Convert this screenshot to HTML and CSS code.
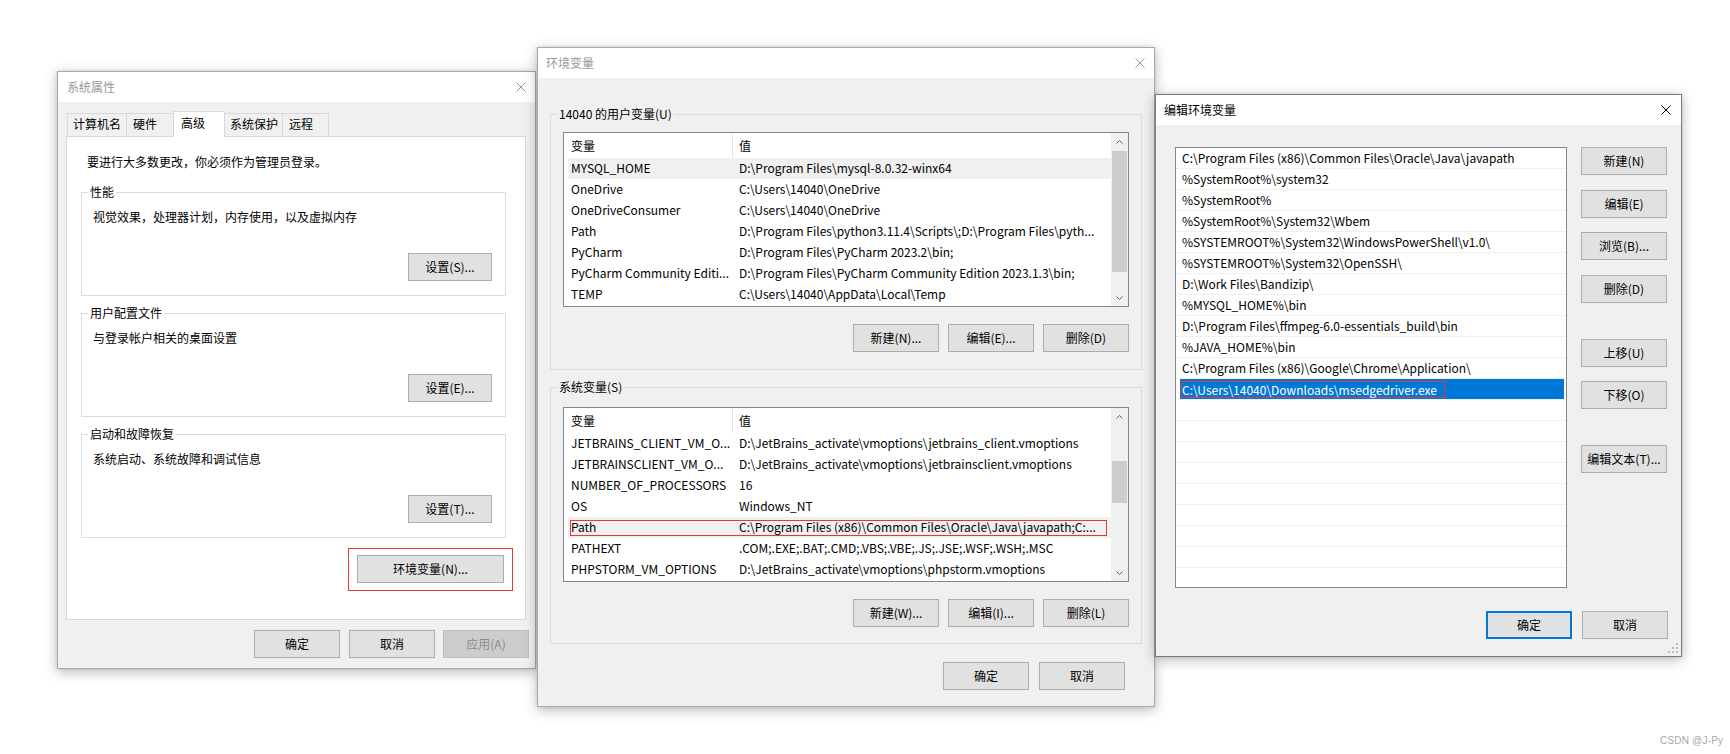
FILE: index.html
```html
<!DOCTYPE html>
<html lang="zh-CN">
<head>
<meta charset="utf-8">
<title>环境变量</title>
<link rel="stylesheet" href="styles.css">
</head>
<body>
<section class="win win-sys">
  <header class="titlebar">
    <span class="title t9">系统属性</span>
    <span class="close"><svg viewBox="0 0 10 10" width="10" height="10"><path d="M0.5 0.5L9.5 9.5M9.5 0.5L0.5 9.5" stroke="currentColor" stroke-width="1" fill="none"/></svg></span>
  </header>
  <div class="sys-body">
    <div class="tabs">
      <div class="tab w60">计算机名</div>
      <div class="tab w48 p6">硬件</div>
      <div class="tab sel w52">高级</div>
      <div class="tab w59">系统保护</div>
      <div class="tab w47 p6">远程</div>
    </div>
    <div class="tabpanel">
      <p class="intro">要进行大多数更改，你必须作为管理员登录。</p>
      <div class="grp sgrp g-first">
        <div class="grp-label white">性能</div>
        <p class="grp-text">视觉效果，处理器计划，内存使用，以及虚拟内存</p>
        <div class="grp-actions"><button class="btn btn-set">设置(S)...</button></div>
      </div>
      <div class="grp sgrp g-next">
        <div class="grp-label white">用户配置文件</div>
        <p class="grp-text">与登录帐户相关的桌面设置</p>
        <div class="grp-actions"><button class="btn btn-set">设置(E)...</button></div>
      </div>
      <div class="grp sgrp g-next">
        <div class="grp-label white">启动和故障恢复</div>
        <p class="grp-text">系统启动、系统故障和调试信息</p>
        <div class="grp-actions"><button class="btn btn-set">设置(T)...</button></div>
      </div>
      <div class="env-row">
        <div class="redbox"><button class="btn btn-env">环境变量(N)...</button></div>
      </div>
    </div>
    <div class="sys-footer">
      <button class="btn mr9">确定</button>
      <button class="btn mr8">取消</button>
      <button class="btn disabled">应用(A)</button>
    </div>
  </div>
</section>

<section class="win win-env">
  <header class="titlebar">
    <span class="title">环境变量</span>
    <span class="close"><svg viewBox="0 0 10 10" width="10" height="10"><path d="M0.5 0.5L9.5 9.5M9.5 0.5L0.5 9.5" stroke="currentColor" stroke-width="1" fill="none"/></svg></span>
  </header>
  <div class="env-body">
    <div class="grp egrp">
      <div class="grp-label">14040 的用户变量(U)</div>
      <div class="lv lv-u">
        <div class="lv-main">
          <div class="lv-head"><div class="c1">变量</div><div class="c2">值</div></div>
          <div class="lv-row hl"><div class="c1">MYSQL_HOME</div><div class="c2">D:\Program Files\mysql-8.0.32-winx64</div></div>
          <div class="lv-row"><div class="c1">OneDrive</div><div class="c2">C:\Users\14040\OneDrive</div></div>
          <div class="lv-row"><div class="c1">OneDriveConsumer</div><div class="c2">C:\Users\14040\OneDrive</div></div>
          <div class="lv-row"><div class="c1">Path</div><div class="c2">D:\Program Files\python3.11.4\Scripts\;D:\Program Files\pyth...</div></div>
          <div class="lv-row"><div class="c1">PyCharm</div><div class="c2">D:\Program Files\PyCharm 2023.2\bin;</div></div>
          <div class="lv-row"><div class="c1">PyCharm Community Editi...</div><div class="c2">D:\Program Files\PyCharm Community Edition 2023.1.3\bin;</div></div>
          <div class="lv-row"><div class="c1">TEMP</div><div class="c2">C:\Users\14040\AppData\Local\Temp</div></div>
        </div>
        <div class="vscroll">
          <div class="sb-btn"><svg width="7" height="4" viewBox="0 0 7 4"><path d="M0.5 3.5L3.5 0.5L6.5 3.5" fill="none" stroke="#606060"/></svg></div>
          <div class="sb-track"><div class="sb-thumb thumb-u"></div></div>
          <div class="sb-btn"><svg width="7" height="4" viewBox="0 0 7 4"><path d="M0.5 0.5L3.5 3.5L6.5 0.5" fill="none" stroke="#606060"/></svg></div>
        </div>
      </div>
      <div class="lv-actions">
        <button class="btn">新建(N)...</button>
        <button class="btn">编辑(E)...</button>
        <button class="btn">删除(D)</button>
      </div>
    </div>

    <div class="grp egrp egrp2">
      <div class="grp-label">系统变量(S)</div>
      <div class="lv lv-s">
        <div class="lv-main">
          <div class="lv-head"><div class="c1">变量</div><div class="c2">值</div></div>
          <div class="lv-row"><div class="c1">JETBRAINS_CLIENT_VM_O...</div><div class="c2">D:\JetBrains_activate\vmoptions\jetbrains_client.vmoptions</div></div>
          <div class="lv-row"><div class="c1">JETBRAINSCLIENT_VM_O...</div><div class="c2">D:\JetBrains_activate\vmoptions\jetbrainsclient.vmoptions</div></div>
          <div class="lv-row"><div class="c1">NUMBER_OF_PROCESSORS</div><div class="c2">16</div></div>
          <div class="lv-row"><div class="c1">OS</div><div class="c2">Windows_NT</div></div>
          <div class="lv-row hl marked"><div class="c1">Path</div><div class="c2">C:\Program Files (x86)\Common Files\Oracle\Java\javapath;C:...</div></div>
          <div class="lv-row"><div class="c1">PATHEXT</div><div class="c2">.COM;.EXE;.BAT;.CMD;.VBS;.VBE;.JS;.JSE;.WSF;.WSH;.MSC</div></div>
          <div class="lv-row"><div class="c1">PHPSTORM_VM_OPTIONS</div><div class="c2">D:\JetBrains_activate\vmoptions\phpstorm.vmoptions</div></div>
        </div>
        <div class="vscroll">
          <div class="sb-btn"><svg width="7" height="4" viewBox="0 0 7 4"><path d="M0.5 3.5L3.5 0.5L6.5 3.5" fill="none" stroke="#606060"/></svg></div>
          <div class="sb-track"><div class="sb-thumb thumb-s"></div></div>
          <div class="sb-btn"><svg width="7" height="4" viewBox="0 0 7 4"><path d="M0.5 0.5L3.5 3.5L6.5 0.5" fill="none" stroke="#606060"/></svg></div>
        </div>
      </div>
      <div class="lv-actions">
        <button class="btn">新建(W)...</button>
        <button class="btn">编辑(I)...</button>
        <button class="btn">删除(L)</button>
      </div>
    </div>

    <div class="env-footer">
      <button class="btn">确定</button>
      <button class="btn">取消</button>
    </div>
  </div>
</section>

<section class="win win-edit">
  <header class="titlebar active">
    <span class="title">编辑环境变量</span>
    <span class="close wide"><svg viewBox="0 0 10 10" width="10" height="10"><path d="M0.5 0.5L9.5 9.5M9.5 0.5L0.5 9.5" stroke="currentColor" stroke-width="1" fill="none"/></svg></span>
  </header>
  <div class="edit-main">
    <div class="pathlist">
      <div class="prow">C:\Program Files (x86)\Common Files\Oracle\Java\javapath</div>
      <div class="prow">%SystemRoot%\system32</div>
      <div class="prow">%SystemRoot%</div>
      <div class="prow">%SystemRoot%\System32\Wbem</div>
      <div class="prow">%SYSTEMROOT%\System32\WindowsPowerShell\v1.0\</div>
      <div class="prow">%SYSTEMROOT%\System32\OpenSSH\</div>
      <div class="prow">D:\Work Files\Bandizip\</div>
      <div class="prow">%MYSQL_HOME%\bin</div>
      <div class="prow">D:\Program Files\ffmpeg-6.0-essentials_build\bin</div>
      <div class="prow">%JAVA_HOME%\bin</div>
      <div class="prow">C:\Program Files (x86)\Google\Chrome\Application\</div>
      <div class="prow selected"><span class="redtext">C:\Users\14040\Downloads\msedgedriver.exe</span></div>
      <div class="prow"></div>
      <div class="prow"></div>
      <div class="prow"></div>
      <div class="prow"></div>
      <div class="prow"></div>
      <div class="prow"></div>
      <div class="prow"></div>
      <div class="prow"></div>
      <div class="prow"></div>
    </div>
    <div class="btncol">
      <button class="btn">新建(N)</button>
      <button class="btn m15">编辑(E)</button>
      <button class="btn m14">浏览(B)...</button>
      <button class="btn m15">删除(D)</button>
      <button class="btn m36">上移(U)</button>
      <button class="btn m14">下移(O)</button>
      <button class="btn m36">编辑文本(T)...</button>
    </div>
  </div>
  <div class="edit-footer">
    <button class="btn primary">确定</button>
    <button class="btn">取消</button>
  </div>
  <svg class="grip" width="10" height="10" viewBox="0 0 10 10"><rect x="8" y="0" width="2" height="2"/><rect x="4" y="4" width="2" height="2"/><rect x="8" y="4" width="2" height="2"/><rect x="0" y="8" width="2" height="2"/><rect x="4" y="8" width="2" height="2"/><rect x="8" y="8" width="2" height="2"/></svg>
</section>

<div class="watermark">CSDN @J-Py</div>
</body>
</html>
```
FILE: styles.css
```css
* { box-sizing: border-box; }
html, body { margin: 0; padding: 0; }
body {
  width: 1730px;
  height: 754px;
  position: relative;
  overflow: hidden;
  background: #ffffff;
  color: #000;
  font-family: "Noto Sans CJK SC", "Noto Sans", sans-serif;
  font-size: 12px;
  line-height: 16px;
}
p { margin: 0; }

/* ---------- windows ---------- */
.win {
  position: absolute;
  display: flex;
  flex-direction: column;
  background: #f0f0f0;
  border: 1px solid #aaaaaa;
  box-shadow: 0 3px 12px rgba(0, 0, 0, 0.28), 0 0 3px rgba(0, 0, 0, 0.10);
}
.win-sys { left: 57px; top: 71px; width: 479px; height: 598px; z-index: 1; }
.win-env { left: 537px; top: 47px; width: 618px; height: 660px; z-index: 2; }
.win-edit { left: 1155px; top: 94px; width: 527px; height: 563px; z-index: 3; border-color: #7a7a7a; }

.titlebar {
  flex: none;
  height: 30px;
  background: #fff;
  display: flex;
  align-items: center;
  justify-content: space-between;
  padding-left: 8px;
  color: #999999;
}
.titlebar .title { margin-top: -1px; }
.titlebar .t9 { margin-left: 1px; }
.titlebar.active { color: #000; }
.close {
  width: 28px;
  height: 30px;
  display: flex;
  align-items: center;
  justify-content: center;
}
.close.wide { width: 30px; }
.close svg { display: block; }

/* ---------- buttons ---------- */
.btn {
  font: inherit;
  line-height: 16px;
  color: #000;
  background: #e1e1e1;
  border: 1px solid #adadad;
  border-radius: 0;
  padding: 0;
  margin: 0;
  width: 86px;
  height: 28px;
  flex: none;
}
.btn.disabled { background: #cccccc; border-color: #bfbfbf; color: #8c8c8c; }
.btn.primary { border: 2px solid #0078d7; }
.mr9 { margin-right: 9px; }
.mr8 { margin-right: 8px; }

/* ---------- system properties ---------- */
.sys-body { padding: 9px 0 0 8px; }
.tabs {
  display: flex;
  align-items: flex-end;
  height: 25px;
  padding-left: 1px;
}
.tab {
  height: 23px;
  border: 1px solid #d9d9d9;
  border-bottom: 0;
  margin-right: -1px;
  padding: 2px 0 0 5px;
  background: #f0f0f0;
  white-space: nowrap;
}
.tab.p6 { padding-left: 6px; }
.tab.sel {
  height: 26px;
  margin-bottom: -1px;
  padding: 3px 0 0 7px;
  background: #fff;
  position: relative;
  z-index: 1;
}
.w60 { width: 60px; }
.w48 { width: 48px; }
.w52 { width: 52px; }
.w59 { width: 59px; }
.w47 { width: 47px; }

.tabpanel {
  width: 460px;
  height: 484px;
  background: #fff;
  border: 1px solid #d9d9d9;
  padding: 17px 0 0 14px;
}
.intro { padding-left: 6px; }

.grp { border: 1px solid #dcdcdc; }
.grp-label {
  width: fit-content;
  margin-top: -9px;
  padding: 0 2px;
  background: #f0f0f0;
  white-space: nowrap;
}
.grp-label.white { background: #fff; }

.sgrp { width: 425px; padding: 0 13px 14px 11px; }
.sgrp .grp-label { margin-left: -5px; }
.g-first { margin-top: 22px; }
.g-next { margin-top: 17px; }
.grp-text { margin-top: 9px; }
.grp-actions { display: flex; justify-content: flex-end; margin-top: 28px; }
.btn-set { width: 84px; }

.env-row {
  display: flex;
  justify-content: flex-end;
  margin-top: 10px;
  padding-right: 12px;
}
.redbox { border: 1px solid #e53935; padding: 6px 8px 7px 8px; }
.btn-env { width: 147px; }

.sys-footer {
  display: flex;
  justify-content: flex-end;
  margin-top: 10px;
  padding-right: 6px;
}

/* ---------- environment variables ---------- */
.env-body { padding: 36px 11px 0 12px; }
.egrp { width: 592px; padding: 0 12px 17px 12px; }
.egrp .grp-label { margin-left: -6px; }
.egrp .lv { margin-top: 10px; }
.egrp2 { margin-top: 17px; padding-bottom: 16px; }
.egrp2 .lv { margin-top: 12px; }

.lv {
  display: flex;
  height: 175px;
  background: #fff;
  border: 1px solid #828790;
  overflow: hidden;
}
.lv-main { flex: 1; min-width: 0; }
.lv-head { display: flex; height: 25px; line-height: 25px; }
.lv-head .c1 { width: 169px; padding-left: 7px; border-right: 1px solid #e5e5e5; }
.lv-head .c2 { padding-left: 6px; }
.lv-row {
  display: flex;
  height: 21px;
  line-height: 20px;
  margin-left: 4px;
  white-space: nowrap;
}
.lv-row .c1 { width: 165px; flex: none; padding-left: 3px; overflow: hidden; }
.lv-row .c2 { flex: 1; min-width: 0; padding-left: 6px; overflow: hidden; }
.lv-row.hl { background: #f0f0f0; }
.lv-row.marked { position: relative; }
.lv-row.marked::after {
  content: "";
  position: absolute;
  left: 2px;
  right: 4px;
  top: 3px;
  bottom: 2px;
  border: 1px solid #e53935;
}

.vscroll {
  width: 17px;
  flex: none;
  display: flex;
  flex-direction: column;
  background: #f0f0f0;
}
.sb-btn {
  height: 17px;
  flex: none;
  display: flex;
  align-items: center;
  justify-content: center;
}
.sb-btn svg { display: block; }
.sb-track { flex: 1; }
.sb-thumb { margin: 0 1px; background: #cdcdcd; }
.thumb-u { margin-top: 1px; height: 121px; }
.thumb-s { margin-top: 36px; height: 42px; }

.lv-actions {
  display: flex;
  justify-content: flex-end;
  gap: 9px;
  margin-top: 17px;
}

.env-footer {
  display: flex;
  justify-content: flex-end;
  gap: 10px;
  margin-top: 18px;
  padding-right: 18px;
}

/* ---------- edit environment variable ---------- */
.edit-main {
  display: flex;
  gap: 14px;
  padding: 22px 0 0 19px;
}
.pathlist {
  width: 392px;
  height: 441px;
  flex: none;
  background: #fff;
  border: 1px solid #828790;
  overflow: hidden;
}
.prow {
  height: 21px;
  line-height: 20px;
  border-bottom: 1px solid #f0f0f0;
  padding-left: 6px;
  white-space: nowrap;
  overflow: hidden;
}
.prow.selected {
  margin: 0 2px 0 4px;
  padding-left: 1px;
  background: #0078d7;
  color: #fff;
  display: flex;
  align-items: center;
}
.redtext {
  display: inline-block;
  border: 1px solid #e53935;
  line-height: 15px;
  padding: 0 7px 0 0;
}
.btncol { display: flex; flex-direction: column; }
.m14 { margin-top: 14px; }
.m15 { margin-top: 15px; }
.m36 { margin-top: 36px; }

.edit-footer {
  display: flex;
  justify-content: flex-end;
  gap: 10px;
  margin-top: 23px;
  padding-right: 13px;
}
.edit-footer .primary { width: 86px; }
.grip {
  position: absolute;
  right: 3px;
  bottom: 3px;
  fill: #bdbdbd;
}

.watermark {
  position: absolute;
  left: 1660px;
  top: 735px;
  font-family: "Liberation Sans", Arial, sans-serif;
  font-size: 10px;
  line-height: 12px;
  color: #a8a8a8;
  letter-spacing: 0.2px;
}
```
